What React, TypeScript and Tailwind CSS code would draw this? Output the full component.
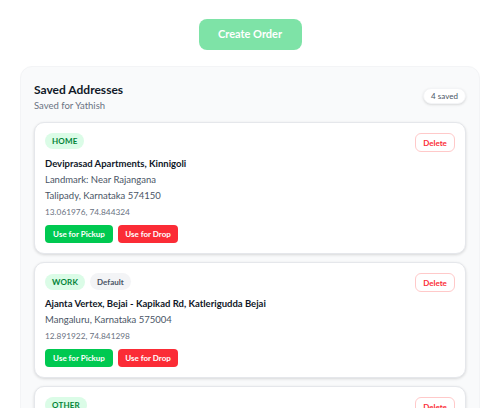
import React from "react";

type Address = {
  label: string;
  isDefault?: boolean;
  title: string;
  landmark?: string;
  line: string;
  coords: string;
};

const ADDRESSES: Address[] = [
  {
    label: "HOME",
    title: "Deviprasad Apartments, Kinnigoli",
    landmark: "Landmark: Near Rajangana",
    line: "Talipady, Karnataka 574150",
    coords: "13.061976, 74.844324",
  },
  {
    label: "WORK",
    isDefault: true,
    title: "Ajanta Vertex, Bejai - Kapikad Rd, Katlerigudda Bejai",
    line: "Mangaluru, Karnataka 575004",
    coords: "12.891922, 74.841298",
  },
  {
    label: "OTHER",
    title: "Kadri Park Road, Kadri",
    line: "Mangaluru, Karnataka 575002",
    coords: "12.886512, 74.855301",
  },
];

function AddressCard({ address }: { address: Address }) {
  return (
    <div className="rounded-[10px] border border-gray-200 bg-white p-[10px] shadow-[0_1px_3px_rgba(0,0,0,0.14)]">
      <div className="flex h-[19px] items-start justify-between">
        <div className="flex items-center gap-[5px]">
          <span className="flex h-4 items-center rounded-full bg-green-100 px-[7px] text-[8px] font-bold tracking-[0.02em] text-green-700">
            {address.label}
          </span>
          {address.isDefault && (
            <span className="flex h-[17px] items-center rounded-full bg-gray-100 px-[7px] text-[8px] font-bold text-gray-600">
              Default
            </span>
          )}
        </div>
        <button
          type="button"
          className="flex h-[19px] w-10 items-center justify-center rounded-md border border-red-200 bg-white text-[8px] font-bold text-red-500"
        >
          Delete
        </button>
      </div>
      <div className="mt-1 text-[9.5px] font-bold leading-4 text-gray-900">{address.title}</div>
      {address.landmark && <div className="text-[9.5px] leading-4 text-gray-600">{address.landmark}</div>}
      <div className="text-[9.5px] leading-4 text-gray-600">{address.line}</div>
      <div className="text-[8.3px] leading-4 text-gray-500">{address.coords}</div>
      <div className="mt-[5px] flex gap-[5px]">
        <button
          type="button"
          className="h-[18px] w-[68px] rounded-[4px] bg-green-500 text-[8px] font-bold text-white"
        >
          Use for Pickup
        </button>
        <button
          type="button"
          className="h-[18px] w-[60px] rounded-[4px] bg-red-500 text-[8px] font-bold text-white"
        >
          Use for Drop
        </button>
      </div>
    </div>
  );
}

export default function App() {
  return (
    <div className="h-[408px] overflow-hidden bg-white font-['Lato',sans-serif]">
      <div className="flex justify-center pt-[19px]">
        <button
          type="button"
          disabled
          className="h-[31px] w-[103px] rounded-lg bg-green-500 text-[11px] font-bold text-white opacity-50"
        >
          Create Order
        </button>
      </div>
      <section className="mx-5 mt-4 rounded-xl border border-gray-100 bg-gray-50 px-[13px] pt-[14px]">
        <div className="flex items-start justify-between">
          <div>
            <h2 className="text-[12px] font-bold leading-[18px] text-gray-900">Saved Addresses</h2>
            <p className="text-[9.5px] leading-[14px] text-gray-500">Saved for Yathish</p>
          </div>
          <span className="mt-[7px] flex h-4 w-[43px] items-center justify-center rounded-full border border-gray-100 bg-white text-[8px] text-gray-600 shadow-sm">
            4 saved
          </span>
        </div>
        <div className="mt-[9px] flex flex-col gap-2">
          {ADDRESSES.map((a) => (
            <AddressCard key={a.label} address={a} />
          ))}
        </div>
      </section>
    </div>
  );
}
